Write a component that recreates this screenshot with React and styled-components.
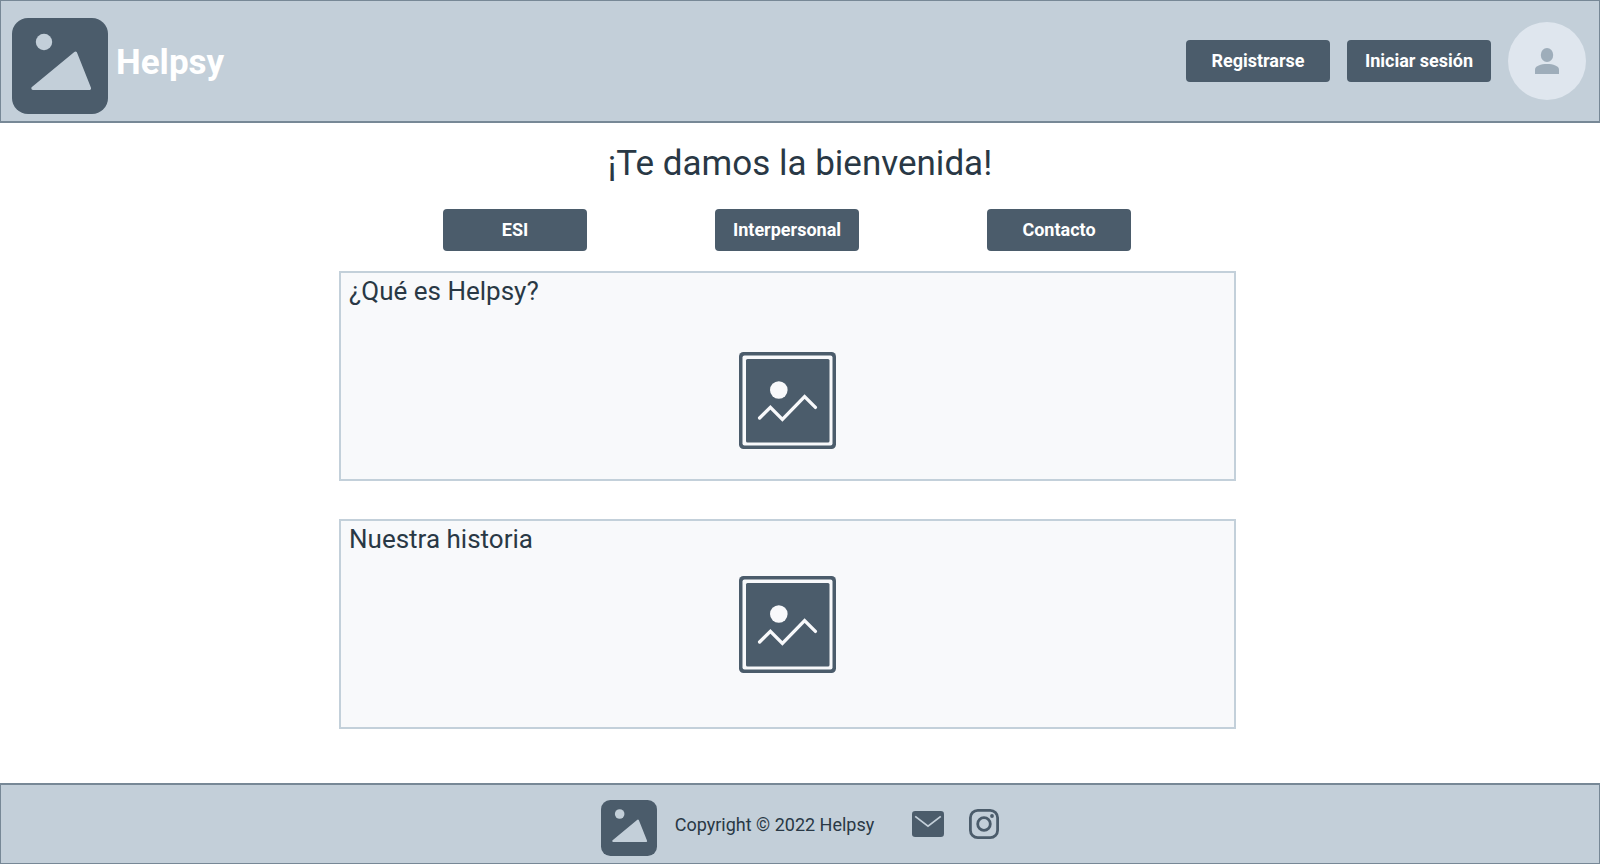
import React from "react";
import styled, { createGlobalStyle, ThemeProvider } from "styled-components";

const theme = {
  bar: "#c3cfd9",
  barLine: "#778896",
  dark: "#4b5c6b",
  text: "#293845",
  card: "#f8f9fb",
  cardLine: "#c3d0da",
  avatar: "#dfe6ee",
  person: "#9eadba",
  white: "#ffffff",
};

const GlobalStyle = createGlobalStyle`
  *, *::before, *::after { box-sizing: border-box; }
  body {
    margin: 0;
    background: #ffffff;
    color: ${({ theme }) => theme.text};
    font-family: Roboto, "Liberation Sans", sans-serif;
  }
`;

const Page = styled.div`
  min-height: 100vh;
  display: flex;
  flex-direction: column;
`;

const Header = styled.header`
  display: flex;
  align-items: center;
  justify-content: space-between;
  padding: 17px 13px 7px 11px;
  background: ${({ theme }) => theme.bar};
  border: 1px solid ${({ theme }) => theme.barLine};
  border-bottom-width: 2px;
`;

const Brand = styled.a`
  display: flex;
  align-items: center;
  gap: 8px;
  color: ${({ theme }) => theme.white};
  font-size: 35px;
  line-height: 40px;
  font-weight: 700;
  text-decoration: none;
`;

const BrandName = styled.span`
  padding-bottom: 6px;
`;

const Account = styled.div`
  display: flex;
  align-items: center;
  gap: 17px;
  padding-bottom: 10px;
`;

const Button = styled.button`
  width: 144px;
  height: 42px;
  padding: 0;
  border: 0;
  border-radius: 4px;
  background: ${({ theme }) => theme.dark};
  color: ${({ theme }) => theme.white};
  font-family: inherit;
  font-size: 18px;
  line-height: 24px;
  font-weight: 700;
  cursor: pointer;
`;

const AvatarButton = styled.button`
  display: grid;
  place-items: center;
  width: 78px;
  height: 78px;
  padding: 0;
  border: 0;
  border-radius: 50%;
  background: ${({ theme }) => theme.avatar};
  cursor: pointer;
`;

const Main = styled.main`
  flex: 1;
  padding-bottom: 54px;
`;

const Title = styled.h1`
  margin: 0;
  padding: 19px 0 23px;
  text-align: center;
  font-size: 35px;
  line-height: 44px;
  font-weight: 400;
`;

const Content = styled.div`
  display: flex;
  flex-direction: column;
  align-items: center;
  padding-right: 25px;
`;

const Nav = styled.nav`
  display: flex;
  justify-content: center;
  gap: 128px;
  margin-bottom: 20px;
  padding-right: 1px;
`;

const Cards = styled.div`
  display: flex;
  flex-direction: column;
  gap: 38px;
  width: 100%;
  max-width: 897px;
`;

const Card = styled.section`
  display: flex;
  flex-direction: column;
  align-items: center;
  gap: ${({ $gap }) => $gap}px;
  min-height: 210px;
  padding: 2px 8px;
  border: 2px solid ${({ theme }) => theme.cardLine};
  background: ${({ theme }) => theme.card};
`;

const CardTitle = styled.h2`
  align-self: stretch;
  margin: 0;
  font-size: 26px;
  line-height: 32px;
  font-weight: 400;
`;

const Footer = styled.footer`
  display: flex;
  align-items: center;
  justify-content: center;
  padding: 15px 0 7px;
  background: ${({ theme }) => theme.bar};
  border: 1px solid ${({ theme }) => theme.barLine};
  border-top-width: 2px;
`;

const Copyright = styled.p`
  margin: 0 38px 0 18px;
  padding-bottom: 6px;
  font-size: 18px;
  line-height: 24px;
`;

const Socials = styled.div`
  display: flex;
  align-items: center;
  gap: 25px;
  padding-bottom: 8px;
`;

const IconLink = styled.a`
  display: flex;
`;

const Drawing = styled.svg`
  display: block;
  flex: none;
`;

function Logo({ size }) {
  return (
    <Drawing width={size} height={size} viewBox="0 0 96 96" aria-hidden="true">
      <rect width="96" height="96" rx="16" fill={theme.dark} />
      <circle cx="32" cy="24" r="8.2" fill={theme.bar} />
      <path
        d="M21 70.3 L63.4 35.2 L77.4 70.3 Z"
        fill={theme.bar}
        stroke={theme.bar}
        strokeWidth="3.4"
        strokeLinejoin="round"
      />
    </Drawing>
  );
}

function Picture() {
  return (
    <Drawing width="97" height="97" viewBox="0 0 97 97" role="img" aria-label="Imagen">
      <rect width="97" height="97" rx="4.5" fill={theme.dark} />
      <rect x="3.5" y="3.5" width="90" height="90" rx="2" fill={theme.card} />
      <rect x="7" y="7" width="83.5" height="83.5" rx="1.5" fill={theme.dark} />
      <circle cx="39.8" cy="38" r="8.8" fill={theme.card} />
      <path
        d="M20.6 66 L31.4 55.4 L43.4 67.4 L65.6 44.6 L76.4 55.4"
        fill="none"
        stroke={theme.card}
        strokeWidth="3.3"
        strokeLinecap="round"
      />
    </Drawing>
  );
}

function Person() {
  return (
    <Drawing width="24" height="26" viewBox="0 0 24 26" aria-hidden="true" fill={theme.person}>
      <ellipse cx="12" cy="7" rx="6.2" ry="7" />
      <path d="M0 26 V21.4 C0 18 6 16 12 16 C18 16 24 18 24 21.4 V26 Z" />
    </Drawing>
  );
}

function Mail() {
  return (
    <Drawing width="32" height="26" viewBox="0 0 32 26" aria-hidden="true">
      <rect width="32" height="26" rx="3.2" fill={theme.dark} />
      <path d="M3.2 5.4 L16 15.2 L28.8 5.4" fill="none" stroke={theme.bar} strokeWidth="1.8" />
    </Drawing>
  );
}

function Instagram() {
  return (
    <Drawing width="30" height="30" viewBox="0 0 30 30" aria-hidden="true">
      <rect x="1.4" y="1.4" width="27.2" height="27.2" rx="7.4" fill="none" stroke={theme.dark} strokeWidth="2.8" />
      <circle cx="15" cy="15" r="6.3" fill="none" stroke={theme.dark} strokeWidth="2.8" />
      <circle cx="23" cy="7" r="1.9" fill={theme.dark} />
    </Drawing>
  );
}

const topics = ["ESI", "Interpersonal", "Contacto"];

const sections = [
  { title: "¿Qué es Helpsy?", gap: 45 },
  { title: "Nuestra historia", gap: 21 },
];

export default function App() {
  return (
    <ThemeProvider theme={theme}>
      <GlobalStyle />
      <Page>
        <Header>
          <Brand href="#">
            <Logo size={96} />
            <BrandName>Helpsy</BrandName>
          </Brand>
          <Account>
            <Button type="button">Registrarse</Button>
            <Button type="button">Iniciar sesión</Button>
            <AvatarButton type="button" aria-label="Perfil">
              <Person />
            </AvatarButton>
          </Account>
        </Header>
        <Main>
          <Title>¡Te damos la bienvenida!</Title>
          <Content>
            <Nav>
              {topics.map((topic) => (
                <Button type="button" key={topic}>{topic}</Button>
              ))}
            </Nav>
            <Cards>
              {sections.map(({ title, gap }) => (
                <Card key={title} $gap={gap}>
                  <CardTitle>{title}</CardTitle>
                  <Picture />
                </Card>
              ))}
            </Cards>
          </Content>
        </Main>
        <Footer>
          <Logo size={56} />
          <Copyright>Copyright © 2022 Helpsy</Copyright>
          <Socials>
            <IconLink href="#" aria-label="Correo">
              <Mail />
            </IconLink>
            <IconLink href="#" aria-label="Instagram">
              <Instagram />
            </IconLink>
          </Socials>
        </Footer>
      </Page>
    </ThemeProvider>
  );
}
